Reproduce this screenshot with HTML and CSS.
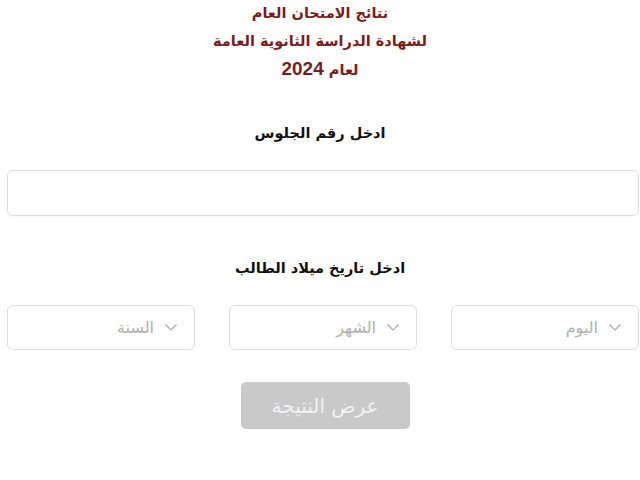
FILE: index.html
```html
<!DOCTYPE html>
<html lang="ar" dir="rtl">
<head>
<meta charset="utf-8">
<link rel="stylesheet" href="styles.css">
</head>
<body>
<div class="page">
  <header class="title">
    <div class="title-line">نتائج الامتحان العام</div>
    <div class="title-line">لشهادة الدراسة الثانوية العامة</div>
    <div class="title-line">لعام <span class="year">2024</span></div>
  </header>
  <div class="label label-seat">ادخل رقم الجلوس</div>
  <div class="form-row">
    <div class="text-input"></div>
  </div>
  <div class="label label-birth">ادخل تاريخ ميلاد الطالب</div>
  <div class="form-row selects">
    <div class="select"><span class="chev"><svg width="12" height="7" viewBox="0 0 12 7"><path d="M0.5 0.5 L6 6 L11.5 0.5" fill="none" stroke="#a8a8a8" stroke-width="1.1"/></svg></span><span class="ph">اليوم</span></div>
    <div class="select"><span class="chev"><svg width="12" height="7" viewBox="0 0 12 7"><path d="M0.5 0.5 L6 6 L11.5 0.5" fill="none" stroke="#a8a8a8" stroke-width="1.1"/></svg></span><span class="ph">الشهر</span></div>
    <div class="select"><span class="chev"><svg width="12" height="7" viewBox="0 0 12 7"><path d="M0.5 0.5 L6 6 L11.5 0.5" fill="none" stroke="#a8a8a8" stroke-width="1.1"/></svg></span><span class="ph">السنة</span></div>
  </div>
  <div class="btn-row">
    <div class="btn">عرض النتيجة</div>
  </div>
</div>
</body>
</html>
```
FILE: styles.css
```css
html, body {
  margin: 0;
  padding: 0;
  background: #ffffff;
}
body {
  width: 640px;
  height: 480px;
  overflow: hidden;
  font-family: "DejaVu Sans", "Liberation Sans", sans-serif;
}
.page {
  display: flex;
  flex-direction: column;
}
.title {
  display: flex;
  flex-direction: column;
  align-items: center;
  color: #7d1b1b;
  font-weight: bold;
  font-size: 14.5px;
}
.title-line {
  height: 28px;
  line-height: 26px;
}
.year {
  font-family: "Liberation Sans", sans-serif;
  font-size: 19px;
}
.label {
  text-align: center;
  font-weight: bold;
  font-size: 14.5px;
  color: #111;
  height: 20px;
  line-height: 20px;
}
.label-seat {
  margin-top: 39px;
}
.form-row {
  padding-left: 7px;
  padding-right: 1px;
  display: flex;
}
.text-input {
  margin-top: 27px;
  flex: 1;
  height: 44px;
  border: 1px solid #dcdcdc;
  border-radius: 6px;
  box-shadow: 0 1px 1px rgba(0,0,0,0.04);
}
.label-birth {
  margin-top: 42px;
}
.selects {
  margin-top: 27px;
  gap: 34px;
}
.select {
  width: 188px;
  height: 45px;
  box-sizing: border-box;
  border: 1px solid #dedede;
  border-radius: 6px;
  display: flex;
  align-items: center;
  padding-right: 17px;
  gap: 11px;
  color: #b0b0b0;
  font-size: 16px;
}
.chev {
  display: flex;
  align-items: center;
}
.btn-row {
  display: flex;
  justify-content: center;
  padding-left: 10px;
  margin-top: 32px;
}
.btn {
  width: 169px;
  height: 47px;
  background: #c9c9c9;
  border-radius: 5px;
  color: #f2f2f2;
  font-size: 20px;
  display: flex;
  align-items: center;
  justify-content: center;
}
```
